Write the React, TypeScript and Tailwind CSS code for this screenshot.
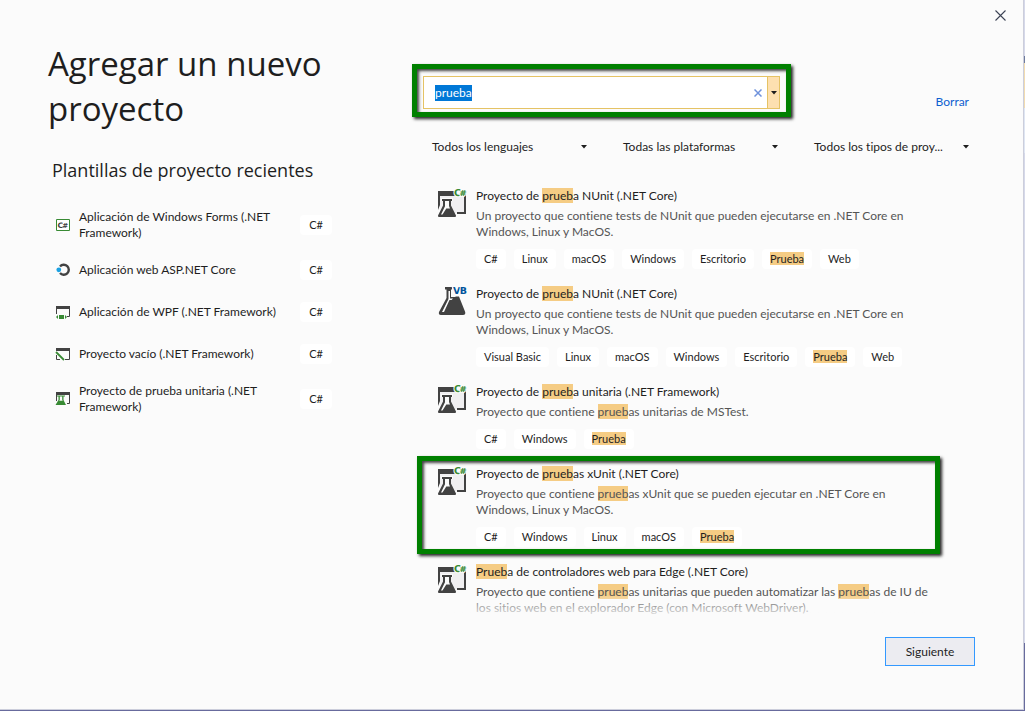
import React, { useState } from 'react';

const SEARCH = /(prueb)/i;

function Mark({ children }: { children: React.ReactNode }) {
  return <mark className="bg-[#f5cc84] text-inherit">{children}</mark>;
}

function Highlighted({ text }: { text: string }) {
  return (
    <>
      {text.split(SEARCH).map((part, i) =>
        SEARCH.test(part) ? <Mark key={i}>{part}</Mark> : <React.Fragment key={i}>{part}</React.Fragment>,
      )}
    </>
  );
}

function CSharpFlask() {
  return (
    <svg viewBox="0 0 30 30" className="h-[30px] w-[30px] shrink-0 overflow-visible" aria-hidden="true">
      <path d="M4 8h24v17H4z" fill="#f0eff1" />
      <path d="M2 3h17v5H2z" fill="#424242" />
      <path d="M2 8h2v9L2 22z" fill="#424242" />
      <path d="M25 7h5v19h-9v-2h7V9h-3z" fill="#424242" />
      <path d="M5 10h12v3h-2v4l5 12H2l5-12v-4H5z" fill="#fbfbfb" />
      <path d="M6 11h10v2h-1v4.500l5 10q.4 1.500-1.300 1.500H3.300Q1.600 29 2 27.500l5-10V13H6z" fill="#424242" />
      <path d="M9 13h4v5l1 2.500h-3.700L6.500 26.500H5L9 18.200z" fill="#fbfbfb" />
      <text x="18" y="8" fontSize="9.500" fontWeight="bold" fontFamily="DejaVu Sans" textRendering="geometricPrecision" fill="#388a34" stroke="#fbfbfb" strokeWidth="2" paintOrder="stroke" strokeLinejoin="round">
        C
        <tspan x="23.500" fontSize="8.500">#</tspan>
      </text>
    </svg>
  );
}

function VbFlask() {
  return (
    <svg viewBox="0 0 30 30" className="h-[30px] w-[30px] shrink-0 overflow-visible" aria-hidden="true">
      <path
        d="M9 1h7v2.500h-1V11h4l1-.5h3L29.200 26q.6 3-2.200 3H5q-2.800 0-2-3l7.500-14V3.500H9z"
        fill="#424242"
      />
      <path d="M12.500 5H14v7.500h3l-1.500 1.500h-2L8 26H6l6.500-13z" fill="#fbfbfb" />
      <text x="17" y="8" fontSize="9.500" fontWeight="bold" fontFamily="DejaVu Sans" textRendering="geometricPrecision" fill="#00539c" stroke="#fbfbfb" strokeWidth="2" paintOrder="stroke" strokeLinejoin="round">
        V
        <tspan x="23.800">B</tspan>
      </text>
    </svg>
  );
}

function FormsIcon() {
  return (
    <svg viewBox="0 0 16 16" className="h-4 w-4 shrink-0" aria-hidden="true">
      <path d="M1.500 2.500h13v11h-13z" fill="#fff" stroke="#388a34" />
      <text x="2.600" y="10.800" fontSize="7.500" fontWeight="bold" fontFamily="DejaVu Sans" textRendering="geometricPrecision" fill="#424242">
        C
        <tspan x="7.200" fontSize="7">#</tspan>
      </text>
    </svg>
  );
}

function WebIcon() {
  return (
    <svg viewBox="0 0 16 16" className="h-4 w-4 shrink-0" aria-hidden="true">
      <path d="M5 4.500A5 5 0 1 1 5 11" fill="none" stroke="#424242" strokeWidth="2.400" />
      <circle cx="3.800" cy="7.800" r="2.400" fill="#1ba1e2" />
    </svg>
  );
}

function WpfIcon() {
  return (
    <svg viewBox="0 0 16 16" className="h-4 w-4 shrink-0" aria-hidden="true">
      <path d="M1 2h14v3H1z" fill="#424242" />
      <path d="M1.500 4v6M14.500 4v8.500H12" fill="none" stroke="#424242" />
      <path d="M4 11h5v4H4zM1 13l2-2v4zM12 13l-2-2v4z" fill="#388a34" />
    </svg>
  );
}

function EmptyIcon() {
  return (
    <svg viewBox="0 0 16 16" className="h-4 w-4 shrink-0" aria-hidden="true">
      <path d="M1 2h14v3H1z" fill="#424242" />
      <path d="M1.500 9v4.500H5M14.500 4v9.500H10" fill="none" stroke="#424242" />
      <path d="M1 6l8 8" fill="none" stroke="#388a34" strokeWidth="1.800" />
    </svg>
  );
}

function TestIcon() {
  return (
    <svg viewBox="0 0 16 16" className="h-4 w-4 shrink-0" aria-hidden="true">
      <path d="M1 1h14v3H1z" fill="#424242" />
      <path d="M1.500 4v6M14.500 4v8.500H12" fill="none" stroke="#424242" />
      <path d="M2 4.500h8v1H8.500V9l2.500 5H.5L3.500 9V5.500H2z" fill="#388a34" />
      <path d="M4.800 5.500h2.400v3.300l.5 1H4.200l.6-1z" fill="#fbfbfb" />
    </svg>
  );
}

function Caret() {
  return (
    <svg viewBox="0 0 6 4" className="h-1 w-1.5 shrink-0" aria-hidden="true">
      <path d="M0 0h6L3 3.500z" fill="#1e1e1e" />
    </svg>
  );
}

const recent = [
  { icon: <FormsIcon />, name: 'Aplicación de Windows Forms (.NET Framework)', tall: true },
  { icon: <WebIcon />, name: 'Aplicación web ASP.NET Core', tall: false },
  { icon: <WpfIcon />, name: 'Aplicación de WPF (.NET Framework)', tall: false },
  { icon: <EmptyIcon />, name: 'Proyecto vacío (.NET Framework)', tall: false },
  { icon: <TestIcon />, name: 'Proyecto de prueba unitaria (.NET Framework)', tall: true },
];

const NUNIT_TEXT =
  'Un proyecto que contiene tests de NUnit que pueden ejecutarse en .NET Core en Windows, Linux y MacOS.';

const templates = [
  {
    name: 'Proyecto de prueba NUnit (.NET Core)',
    text: NUNIT_TEXT,
    tags: ['C#', 'Linux', 'macOS', 'Windows', 'Escritorio', 'Prueba', 'Web'],
  },
  {
    name: 'Proyecto de prueba NUnit (.NET Core)',
    text: NUNIT_TEXT,
    vb: true,
    tags: ['Visual Basic', 'Linux', 'macOS', 'Windows', 'Escritorio', 'Prueba', 'Web'],
  },
  {
    name: 'Proyecto de prueba unitaria (.NET Framework)',
    text: 'Proyecto que contiene pruebas unitarias de MSTest.',
    tags: ['C#', 'Windows', 'Prueba'],
  },
  {
    name: 'Proyecto de pruebas xUnit (.NET Core)',
    text: 'Proyecto que contiene pruebas xUnit que se pueden ejecutar en .NET Core en Windows, Linux y MacOS.',
    framed: true,
    tags: ['C#', 'Windows', 'Linux', 'macOS', 'Prueba'],
  },
  {
    name: 'Prueba de controladores web para Edge (.NET Core)',
    text: 'Proyecto que contiene pruebas unitarias que pueden automatizar las pruebas de IU de los sitios web en el explorador Edge (con Microsoft WebDriver).',
    tags: [],
  },
];

const filters = ['Todos los lenguajes', 'Todas las plataformas', 'Todos los tipos de proy...'];

function Tag({ label }: { label: string }) {
  return (
    <li className="rounded bg-white px-2 text-[11px] leading-5 text-[#1e1e1e]">
      {label === 'Prueba' ? <Mark>{label}</Mark> : label}
    </li>
  );
}

export default function App() {
  const [query, setQuery] = useState('prueba');
  return (
    <div className="flex min-h-screen border-b border-[#686b9d] bg-[#fbfbfb] font-['Lato','Open_Sans',sans-serif] text-[12px] leading-4 text-[#1e1e1e] [font-variant-ligatures:none]">
      <div className="flex min-w-0 grow flex-col border-r border-b border-[#cccedb]">
        <header className="flex h-8 shrink-0 justify-end pt-2.5 pr-[17px]">
          <button aria-label="Cerrar" className="h-[11px] w-[11px]">
            <svg viewBox="0 0 11 11" className="h-[11px] w-[11px]" aria-hidden="true">
              <path d="M.5.5l10 10M10.500.5l-10 10" stroke="#3c4354" strokeWidth="1.100" />
            </svg>
          </button>
        </header>

        <main className="flex grow">
          <section className="w-[332px] shrink-0 pl-12">
            <h1 className="mt-[9px] font-['Open_Sans',sans-serif] text-[33px] leading-[45px]">Agregar un nuevo proyecto</h1>
            <h2 className="mt-[27px] pl-1 font-['Open_Sans',sans-serif] text-[18px] leading-[25px]">Plantillas de proyecto recientes</h2>
            <ul className="mt-[18px] pl-[7px]">
              {recent.map((item) => (
                <li key={item.name} className={'flex items-center ' + (item.tall ? 'h-12' : 'h-[42px]')}>
                  {item.icon}
                  <a href="#" className="ml-2 w-[205px]">{item.name}</a>
                  <span className="ml-auto rounded bg-white px-[9px] text-[11px] leading-5">C#</span>
                </li>
              ))}
            </ul>
          </section>

          <section className="ml-20 min-w-0 grow pr-12">
            <div className="flex items-end justify-between pt-8">
              <div className="w-[379px] border-[5px] border-[#008000] px-1.5 pt-[7px] pb-[3px] shadow-[2px_2px_3px_#222,inset_2px_2px_3px_#444]">
                <div className="flex h-[33px] items-center border border-[#e5c365] bg-white">
                  <div className="flex grow pl-[11px]">
                    <input
                      aria-label="Buscar plantillas"
                      value={query}
                      onChange={(e) => setQuery(e.target.value)}
                      className="field-sizing-content min-w-0 bg-[#0078d7] text-white outline-none"
                    />
                  </div>
                  <button aria-label="Borrar texto" className="mr-[5px]">
                    <svg viewBox="0 0 8 8" className="h-2 w-2" aria-hidden="true">
                      <path d="M.5.5l7 7M7.500.5l-7 7" stroke="#6f92dc" strokeWidth="1.500" />
                    </svg>
                  </button>
                  <button
                    aria-label="Búsquedas recientes"
                    className="flex w-3 items-center justify-center self-stretch border-l border-[#e5c365] bg-[#fde0b0]"
                  >
                    <Caret />
                  </button>
                </div>
              </div>
              <a href="#" className="mr-1.5 mb-[7px] text-[#0e5fd0]">Borrar</a>
            </div>
            <div className="mt-[22px] ml-5 flex gap-9">
              {filters.map((f) => (
                <button key={f} className="flex w-[155px] items-center justify-between whitespace-nowrap">
                  {f}
                  <Caret />
                </button>
              ))}
            </div>

            <div className="relative mt-[33px] ml-6 max-w-[500px]">
              <ul className="flex flex-col gap-[17px]">
                {templates.map((t, i) => (
                  <li key={i} className="relative flex">
                    {t.vb ? <VbFlask /> : <CSharpFlask />}
                    <div className="ml-2.5 w-[460px]">
                      <h3><Highlighted text={t.name} /></h3>
                      <p className="mt-1 text-[#555]"><Highlighted text={t.text} /></p>
                      {t.tags.length > 0 && (
                        <ul className="mt-[9px] flex gap-2">{t.tags.map((tag) => <Tag key={tag} label={tag} />)}</ul>
                      )}
                    </div>
                    {t.framed && (
                      <div className="pointer-events-none absolute -top-2.5 -right-1 -bottom-[7px] -left-[19px] border-[5px] border-[#008000] shadow-[2px_2px_3px_#222,inset_2px_2px_3px_#444]" />
                    )}
                  </li>
                ))}
              </ul>
              <div className="pointer-events-none absolute inset-x-0 -bottom-1 h-6 bg-linear-to-b from-[#fbfbfb]/10 to-[#fbfbfb]" />
            </div>

            <div className="mt-[21px] flex justify-end">
              <button className="h-[29px] w-[90px] border border-[#3399ff] bg-[#ececf1]">Siguiente</button>
            </div>
          </section>
        </main>
      </div>
      <div className="flex w-px shrink-0 flex-col" aria-hidden="true">
        <div className="h-14 bg-[#d6d9ea]" />
        <div className="h-[7px] bg-[#6d7a9c]" />
        <div className="h-[45px] bg-[#f2dcb0]" />
        <div className="h-[45px] bg-[#dfe6f3]" />
        <div className="h-[490px] bg-[#d6d9ea]" />
        <div className="grow bg-[#686b9d]" />
      </div>
    </div>
  );
}
